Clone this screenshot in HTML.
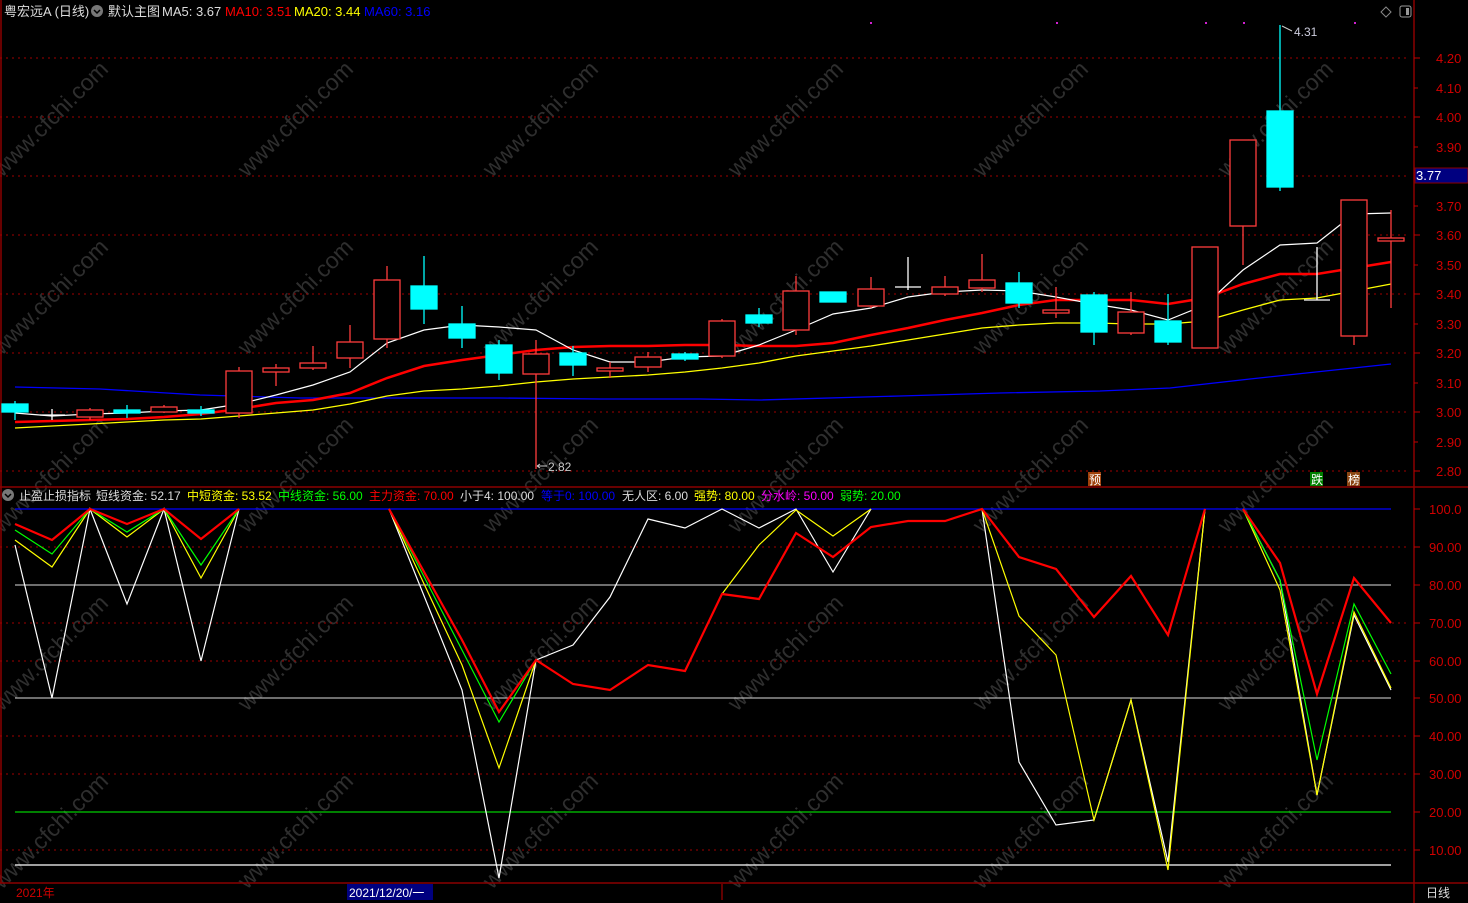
<!DOCTYPE html>
<html><head><meta charset="utf-8"><style>
html,body{margin:0;padding:0;background:#000;width:1468px;height:903px;overflow:hidden}
svg{display:block}
text{font-family:"Liberation Sans","Noto Sans CJK SC",sans-serif}
</style></head><body>
<svg width="1468" height="903" viewBox="0 0 1468 903" xmlns="http://www.w3.org/2000/svg">
<rect width="1468" height="903" fill="#000"/>
<g fill="#2e2e2e" font-size="23" font-family="Liberation Sans,sans-serif">
<text transform="translate(2,178) rotate(-45)">www.cfchi.com</text>
<text transform="translate(247,178) rotate(-45)">www.cfchi.com</text>
<text transform="translate(492,178) rotate(-45)">www.cfchi.com</text>
<text transform="translate(737,178) rotate(-45)">www.cfchi.com</text>
<text transform="translate(982,178) rotate(-45)">www.cfchi.com</text>
<text transform="translate(1227,178) rotate(-45)">www.cfchi.com</text>
<text transform="translate(2,356) rotate(-45)">www.cfchi.com</text>
<text transform="translate(247,356) rotate(-45)">www.cfchi.com</text>
<text transform="translate(492,356) rotate(-45)">www.cfchi.com</text>
<text transform="translate(737,356) rotate(-45)">www.cfchi.com</text>
<text transform="translate(982,356) rotate(-45)">www.cfchi.com</text>
<text transform="translate(1227,356) rotate(-45)">www.cfchi.com</text>
<text transform="translate(2,534) rotate(-45)">www.cfchi.com</text>
<text transform="translate(247,534) rotate(-45)">www.cfchi.com</text>
<text transform="translate(492,534) rotate(-45)">www.cfchi.com</text>
<text transform="translate(737,534) rotate(-45)">www.cfchi.com</text>
<text transform="translate(982,534) rotate(-45)">www.cfchi.com</text>
<text transform="translate(1227,534) rotate(-45)">www.cfchi.com</text>
<text transform="translate(2,712) rotate(-45)">www.cfchi.com</text>
<text transform="translate(247,712) rotate(-45)">www.cfchi.com</text>
<text transform="translate(492,712) rotate(-45)">www.cfchi.com</text>
<text transform="translate(737,712) rotate(-45)">www.cfchi.com</text>
<text transform="translate(982,712) rotate(-45)">www.cfchi.com</text>
<text transform="translate(1227,712) rotate(-45)">www.cfchi.com</text>
<text transform="translate(2,890) rotate(-45)">www.cfchi.com</text>
<text transform="translate(247,890) rotate(-45)">www.cfchi.com</text>
<text transform="translate(492,890) rotate(-45)">www.cfchi.com</text>
<text transform="translate(737,890) rotate(-45)">www.cfchi.com</text>
<text transform="translate(982,890) rotate(-45)">www.cfchi.com</text>
<text transform="translate(1227,890) rotate(-45)">www.cfchi.com</text>
</g>
<g stroke="#8b0000" fill="none" stroke-width="1.5">
<line x1="0" y1="487" x2="1414" y2="487"/>
<line x1="1414" y1="0" x2="1414" y2="903"/>
<line x1="0" y1="883" x2="1468" y2="883"/>
<line x1="1" y1="0" x2="1" y2="883"/>
<line x1="1414" y1="487" x2="1468" y2="487"/>
</g>
<g stroke="#a00000" stroke-dasharray="2,4" stroke-width="1">
<line x1="0" y1="58" x2="1410" y2="58"/><line x1="0" y1="117" x2="1410" y2="117"/>
<line x1="0" y1="176" x2="1410" y2="176"/><line x1="0" y1="235" x2="1410" y2="235"/>
<line x1="0" y1="294" x2="1410" y2="294"/><line x1="0" y1="353" x2="1410" y2="353"/>
<line x1="0" y1="412" x2="1410" y2="412"/><line x1="0" y1="471" x2="1410" y2="471"/>
</g>
<g stroke="#c00000">
<line x1="1414" y1="58" x2="1420" y2="58"/><line x1="1414" y1="88" x2="1418" y2="88"/><line x1="1414" y1="117" x2="1420" y2="117"/><line x1="1414" y1="147" x2="1418" y2="147"/><line x1="1414" y1="206" x2="1418" y2="206"/><line x1="1414" y1="235" x2="1420" y2="235"/><line x1="1414" y1="265" x2="1418" y2="265"/><line x1="1414" y1="294" x2="1420" y2="294"/><line x1="1414" y1="324" x2="1418" y2="324"/><line x1="1414" y1="353" x2="1420" y2="353"/><line x1="1414" y1="383" x2="1418" y2="383"/><line x1="1414" y1="412" x2="1420" y2="412"/><line x1="1414" y1="442" x2="1418" y2="442"/><line x1="1414" y1="471" x2="1420" y2="471"/>
</g>
<g fill="#d00000" font-size="13">
<text x="1436" y="63">4.20</text><text x="1436" y="93">4.10</text><text x="1436" y="122">4.00</text><text x="1436" y="152">3.90</text><text x="1436" y="211">3.70</text><text x="1436" y="240">3.60</text><text x="1436" y="270">3.50</text><text x="1436" y="299">3.40</text><text x="1436" y="329">3.30</text><text x="1436" y="358">3.20</text><text x="1436" y="388">3.10</text><text x="1436" y="417">3.00</text><text x="1436" y="447">2.90</text><text x="1436" y="476">2.80</text>
</g>
<rect x="1415" y="168" width="53" height="15" fill="#000080" stroke="#8b0000"/>
<text x="1416" y="180" fill="#fff" font-size="13">3.77</text>
<path d="M1386 7 l5 5 -5 5 -5 -5z" fill="none" stroke="#888"/>
<rect x="1400" y="6" width="11" height="11" rx="2" fill="none" stroke="#999"/><rect x="1406" y="8" width="3" height="7" fill="#999"/>
<g fill="#d020d0"><rect x="870" y="22" width="2" height="2"/><rect x="1205" y="22" width="2" height="2"/><rect x="1243" y="22" width="2" height="2"/><rect x="1354" y="22" width="2" height="2"/><rect x="1056" y="22" width="2" height="2"/></g>
<polyline fill="none" stroke="#0000ff" stroke-width="1.3" points="15,387 100,389 200,395 300,398 400,398 500,398 600,399 700,399 760,400 900,396 1000,393 1100,391 1170,388 1250,379 1391,364"/>
<polyline fill="none" stroke="#ffff00" stroke-width="1.3" points="15,428 52,426 90,424 127,422 164,420 201,419 239,416 276,413 313,410 350,404 387,396 424,391 462,389 499,386 536,382 573,379 610,377 648,375 685,372 722,368 759,363 796,356 833,351 871,346 908,340 945,334 982,328 1019,325 1056,323 1094,323 1131,324 1168,324 1205,321 1243,310 1280,300 1317,298 1354,291 1391,284"/>
<polyline fill="none" stroke="#ff0000" stroke-width="2.5" points="15,422 52,421 90,420 127,419 164,417 201,414 239,409 276,403 313,400 350,393 387,378 424,366 462,360 499,355 536,350 573,347 610,346 648,346 685,345 722,345 759,346 796,346 833,343 871,335 908,328 945,320 982,313 1019,305 1056,300 1094,300 1131,300 1168,304 1205,298 1243,284 1280,274 1317,274 1354,268 1391,262"/>
<polyline fill="none" stroke="#ffffff" stroke-width="1.2" points="15,413 52,416 90,414 127,413 164,411 201,410 239,404 276,395 313,385 350,372 387,343 424,330 462,325 499,327 536,330 573,350 610,362 648,362 685,357 722,356 759,345 796,330 833,314 871,308 908,297 945,292 982,290 1019,291 1056,297 1094,304 1131,310 1168,320 1205,305 1243,270 1280,245 1317,243 1354,214 1391,213"/>
<g stroke="#ff3c3c" fill="none" stroke-width="1.3">
<line x1="90" y1="408" x2="90" y2="420"/><rect x="77" y="410" width="26" height="7" fill="#000"/>
<line x1="164" y1="405" x2="164" y2="413"/><rect x="151" y="407" width="26" height="5" fill="#000"/>
<line x1="239" y1="367" x2="239" y2="418"/><rect x="226" y="371" width="26" height="42" fill="#000"/>
<line x1="276" y1="364" x2="276" y2="386"/><rect x="263" y="368" width="26" height="4" fill="#000"/>
<line x1="313" y1="346" x2="313" y2="370"/><rect x="300" y="363" width="26" height="5" fill="#000"/>
<line x1="350" y1="325" x2="350" y2="368"/><rect x="337" y="342" width="26" height="16" fill="#000"/>
<line x1="387" y1="266" x2="387" y2="348"/><rect x="374" y="280" width="26" height="59" fill="#000"/>
<line x1="536" y1="340" x2="536" y2="469"/><rect x="523" y="354" width="26" height="20" fill="#000"/>
<line x1="610" y1="362" x2="610" y2="378"/><rect x="597" y="368" width="26" height="3" fill="#000"/>
<line x1="648" y1="352" x2="648" y2="372"/><rect x="635" y="357" width="26" height="10" fill="#000"/>
<line x1="722" y1="319" x2="722" y2="358"/><rect x="709" y="321" width="26" height="35" fill="#000"/>
<line x1="796" y1="276" x2="796" y2="335"/><rect x="783" y="291" width="26" height="39" fill="#000"/>
<line x1="871" y1="277" x2="871" y2="308"/><rect x="858" y="289" width="26" height="17" fill="#000"/>
<line x1="945" y1="276" x2="945" y2="296"/><rect x="932" y="287" width="26" height="7" fill="#000"/>
<line x1="982" y1="254" x2="982" y2="292"/><rect x="969" y="280" width="26" height="8" fill="#000"/>
<line x1="1056" y1="287" x2="1056" y2="318"/><rect x="1043" y="310" width="26" height="3" fill="#000"/>
<line x1="1131" y1="292" x2="1131" y2="335"/><rect x="1118" y="312" width="26" height="21" fill="#000"/>
<rect x="1192" y="247" width="26" height="101" fill="#000"/>
<line x1="1243" y1="226" x2="1243" y2="265"/><rect x="1230" y="140" width="26" height="86" fill="#000"/>
<line x1="1354" y1="336" x2="1354" y2="345"/><rect x="1341" y="200" width="26" height="136" fill="#000"/>
<line x1="1391" y1="210" x2="1391" y2="308"/><rect x="1378" y="238" width="26" height="3" fill="#000"/>
</g>
<g stroke="#fff" stroke-width="1.3">
<line x1="52" y1="409" x2="52" y2="420"/><line x1="40" y1="415" x2="65" y2="415"/>
<line x1="908" y1="257" x2="908" y2="290"/><line x1="895" y1="287" x2="921" y2="287"/>
<line x1="1317" y1="247" x2="1317" y2="300"/><line x1="1304" y1="300" x2="1330" y2="300"/>
</g>
<g stroke="#00ffff" fill="#00ffff" stroke-width="1.3">
<line x1="15" y1="401" x2="15" y2="420"/><rect x="2" y="404" width="26" height="8"/>
<line x1="127" y1="405" x2="127" y2="418"/><rect x="114" y="410" width="26" height="3"/>
<line x1="201" y1="406" x2="201" y2="416"/><rect x="188" y="410" width="26" height="3"/>
<line x1="424" y1="256" x2="424" y2="324"/><rect x="411" y="286" width="26" height="23"/>
<line x1="462" y1="306" x2="462" y2="348"/><rect x="449" y="324" width="26" height="14"/>
<line x1="499" y1="340" x2="499" y2="380"/><rect x="486" y="345" width="26" height="28"/>
<line x1="573" y1="346" x2="573" y2="376"/><rect x="560" y="353" width="26" height="12"/>
<line x1="685" y1="352" x2="685" y2="361"/><rect x="672" y="354" width="26" height="5"/>
<line x1="759" y1="308" x2="759" y2="327"/><rect x="746" y="315" width="26" height="8"/>
<rect x="820" y="292" width="26" height="10"/>
<line x1="1019" y1="272" x2="1019" y2="308"/><rect x="1006" y="283" width="26" height="20"/>
<line x1="1094" y1="292" x2="1094" y2="345"/><rect x="1081" y="295" width="26" height="37"/>
<line x1="1168" y1="294" x2="1168" y2="345"/><rect x="1155" y="321" width="26" height="21"/>
<line x1="1280" y1="25" x2="1280" y2="191"/><rect x="1267" y="111" width="26" height="76"/>
</g>
<text x="1294" y="36" fill="#ccd" font-size="12">4.31</text>
<path d="M1282 26 l10 5" stroke="#ccc" fill="none"/>
<text x="548" y="471" fill="#ccc" font-size="12">2.82</text>
<path d="M537 466 h10 M537 466 l3 -2 M537 466 l3 2" stroke="#ccc" fill="none"/>
<rect x="1088" y="472" width="13" height="14" fill="#a0400a"/><text x="1089" y="484" fill="#fff" font-size="12">预</text>
<rect x="1310" y="472" width="13" height="14" fill="#008000"/><text x="1311" y="484" fill="#fff" font-size="12">跌</text>
<rect x="1347" y="472" width="13" height="14" fill="#8b4513"/><text x="1348" y="484" fill="#fff" font-size="12">榜</text>
<text x="4" y="16" font-size="13" fill="#ddd">粤宏远A (日线)</text>
<circle cx="97" cy="11" r="6" fill="#777"/><path d="M94 10 l3 3 3 -3" stroke="#000" fill="none" stroke-width="1.5"/>
<text x="108" y="16" font-size="13" fill="#ddd">默认主图</text>
<text x="162" y="16" font-size="13" fill="#ddd">MA5: 3.67</text>
<text x="225" y="16" font-size="13" fill="#ff0000">MA10: 3.51</text>
<text x="294" y="16" font-size="13" fill="#ffff00">MA20: 3.44</text>
<text x="364" y="16" font-size="13" fill="#0000ff">MA60: 3.16</text>
<circle cx="8" cy="495" r="6" fill="#777"/><path d="M5 494 l3 3 3 -3" stroke="#000" fill="none" stroke-width="1.5"/>
<g font-size="12">
<text x="19" y="500" fill="#ddd">止盈止损指标</text>
<text x="96" y="500" fill="#ddd">短线资金: 52.17</text>
<text x="187" y="500" fill="#ffff00">中短资金: 53.52</text>
<text x="278" y="500" fill="#00ff00">中线资金: 56.00</text>
<text x="369" y="500" fill="#ff0000">主力资金: 70.00</text>
<text x="460" y="500" fill="#ddd">小于4: 100.00</text>
<text x="541" y="500" fill="#0000ff">等于0: 100.00</text>
<text x="622" y="500" fill="#ddd">无人区: 6.00</text>
<text x="694" y="500" fill="#ffff00">强势: 80.00</text>
<text x="761" y="500" fill="#ff00ff">分水岭: 50.00</text>
<text x="840" y="500" fill="#00ff00">弱势: 20.00</text>
</g>
<g stroke="#a00000" stroke-dasharray="2,4">
<line x1="0" y1="547" x2="1410" y2="547"/><line x1="0" y1="623" x2="1410" y2="623"/><line x1="0" y1="661" x2="1410" y2="661"/><line x1="0" y1="736" x2="1410" y2="736"/><line x1="0" y1="774" x2="1410" y2="774"/><line x1="0" y1="850" x2="1410" y2="850"/>
</g>
<line x1="15" y1="509" x2="1391" y2="509" stroke="#0000ff" stroke-width="1.3"/>
<line x1="15" y1="585" x2="1391" y2="585" stroke="#ddd"/>
<line x1="15" y1="698" x2="1391" y2="698" stroke="#ddd"/>
<line x1="15" y1="812" x2="1391" y2="812" stroke="#00ff00"/>
<line x1="15" y1="865" x2="1391" y2="865" stroke="#fff" stroke-width="1.3"/>
<g stroke="#c00000">
<line x1="1414" y1="509" x2="1420" y2="509"/><line x1="1414" y1="547" x2="1420" y2="547"/><line x1="1414" y1="585" x2="1420" y2="585"/><line x1="1414" y1="623" x2="1420" y2="623"/><line x1="1414" y1="661" x2="1420" y2="661"/><line x1="1414" y1="698" x2="1420" y2="698"/><line x1="1414" y1="736" x2="1420" y2="736"/><line x1="1414" y1="774" x2="1420" y2="774"/><line x1="1414" y1="812" x2="1420" y2="812"/><line x1="1414" y1="850" x2="1420" y2="850"/>
</g>
<g fill="#d00000" font-size="13">
<text x="1429" y="514">100.0</text><text x="1429" y="552">90.00</text><text x="1429" y="590">80.00</text><text x="1429" y="628">70.00</text><text x="1429" y="666">60.00</text><text x="1429" y="703">50.00</text><text x="1429" y="741">40.00</text><text x="1429" y="779">30.00</text><text x="1429" y="817">20.00</text><text x="1429" y="855">10.00</text>
</g>
<g fill="none" stroke-width="1.2">
<g stroke="#ffffff">
<polyline points="15,545 52,698 90,509 127,604 164,509 201,661 239,509"/>
<polyline points="389,509 462,690 499,878 536,660 573,645 610,597 648,519 685,528 722,509 759,528 796,509 833,572 871,509"/>
<polyline points="982,509 1019,762 1056,825 1094,820 1131,700 1168,862 1205,509"/>
<polyline points="1243,509 1280,580 1317,795 1354,615 1391,690"/>
</g>
<g stroke="#ffff00">
<polyline points="15,540 52,567 90,509 127,537 164,509 201,578 239,509"/>
<polyline points="389,509 462,665 499,768 536,660"/>
<polyline points="722,594 759,545 796,510 833,536 871,509"/>
<polyline points="982,509 1019,616 1056,655 1094,820 1131,700 1168,870 1205,509"/>
<polyline points="1243,509 1280,590 1317,795 1354,612 1391,688"/>
</g>
<g stroke="#00ff00">
<polyline points="15,530 52,554 90,509 127,532 164,509 201,565 239,509"/>
<polyline points="389,509 462,650 499,722 536,660"/>
<polyline points="1243,509 1280,580 1317,760 1354,604 1391,674"/>
</g>
<g stroke="#ff0000" stroke-width="2.2">
<polyline points="15,524 52,540 90,509 127,524 164,509 201,539 239,509"/>
<polyline points="389,509 462,640 499,712 536,660 573,684 610,690 648,665 685,671 722,594 759,599 796,533 833,557 871,527 908,521 945,521 982,509 1019,557 1056,569 1094,617 1131,576 1168,635 1205,509"/>
<polyline points="1243,509 1280,563 1317,694 1354,578 1391,623"/>
</g>
</g>
<text x="16" y="897" fill="#d00000" font-size="12">2021年</text>
<rect x="347" y="884" width="86" height="16" fill="#000080"/>
<text x="349" y="897" fill="#fff" font-size="12">2021/12/20/一</text>
<line x1="722" y1="884" x2="722" y2="900" stroke="#c00000"/>
<text x="1426" y="897" fill="#ddd" font-size="12">日线</text>
</svg>
</body></html>
